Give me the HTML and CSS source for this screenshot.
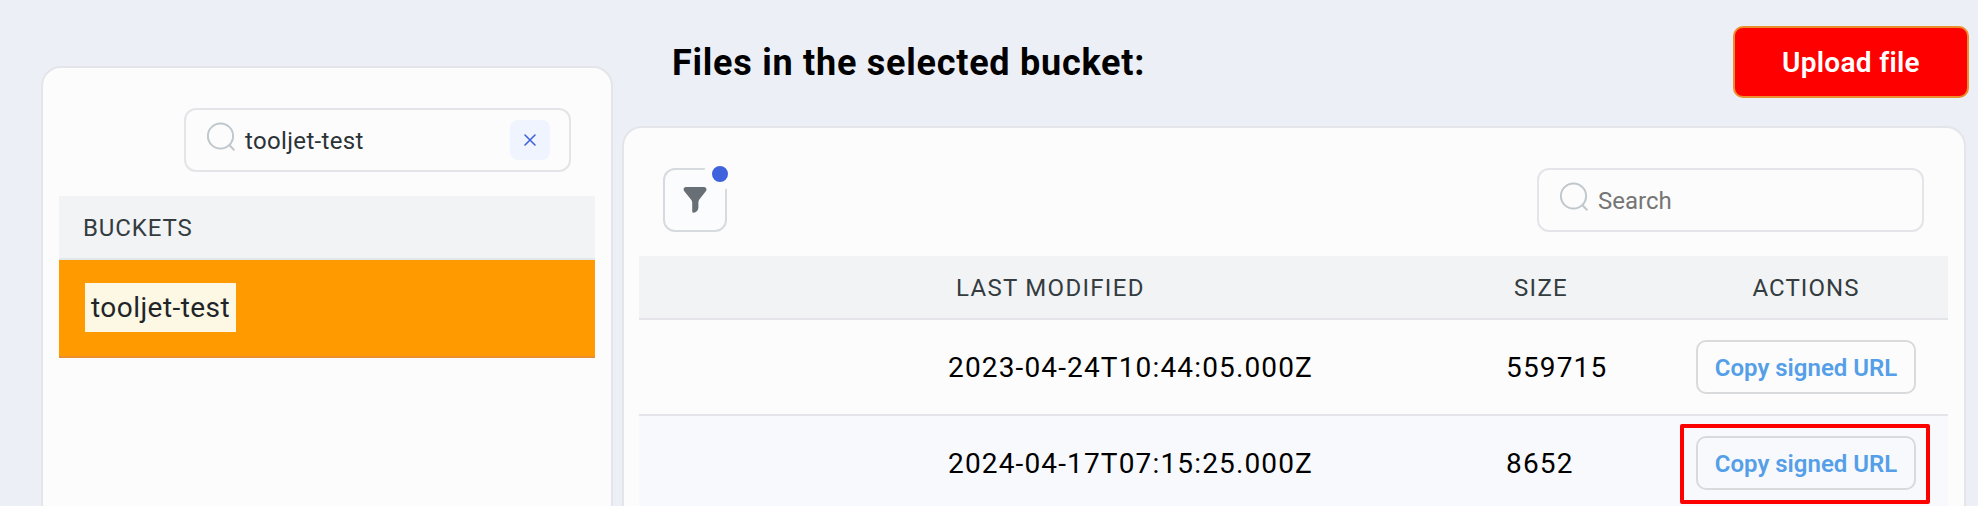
FILE: index.html
```html
<!DOCTYPE html>
<html lang="en">
<head>
<meta charset="utf-8">
<title>Buckets</title>
<link rel="stylesheet" href="styles.css">
</head>
<body>
<div class="app">
  <aside class="panel sidebar">
    <div class="toolbar sidebar-toolbar">
      <div class="search">
        <svg class="search-icon" width="32" height="32" viewBox="0 0 32 32" fill="none" stroke="#c1c8cd" stroke-width="2" stroke-linecap="round"><circle cx="15.5" cy="15" r="12.6"/><path d="M24.5 24.2l4.3 4.6"/></svg>
        <span class="search-value">tooljet-test</span>
        <button class="clear" aria-label="Clear"><svg width="14" height="14" viewBox="0 0 14 14" stroke="#3e63dd" stroke-width="1.6" stroke-linecap="round"><path d="M2 2l10 10M12 2L2 12"/></svg></button>
      </div>
    </div>
    <div class="bucket-table">
      <div class="head bucket-head">BUCKETS</div>
      <div class="bucket-row"><span class="highlight">tooljet-test</span></div>
    </div>
  </aside>
  <main class="content">
    <header class="topbar">
      <h1 class="title">Files in the selected bucket:</h1>
      <button class="upload">Upload file</button>
    </header>
    <section class="panel files">
      <div class="toolbar files-toolbar">
        <button class="filter" aria-label="Filter">
          <svg class="funnel" width="24" height="28" viewBox="0 0 24 28" fill="#687076"><path d="M3 1H21C23 1 24.2 3.2 23 5L16.5 13.2Q15.4 14.7 15.4 16.3V21.5Q15.4 24.6 13 25.9L11.5 26.6Q9.3 27.2 9.2 25.2V16.8Q9.2 15 8 13.5L1.3 5.2C-.2 3.2.8 1 3 1Z"/></svg>
          <span class="dot"></span>
        </button>
        <div class="search">
          <svg class="search-icon" width="32" height="32" viewBox="0 0 32 32" fill="none" stroke="#c1c8cd" stroke-width="2" stroke-linecap="round"><circle cx="15.5" cy="15" r="12.6"/><path d="M24.5 24.2l4.3 4.6"/></svg>
          <span class="search-value placeholder">Search</span>
        </div>
      </div>
      <div class="file-table">
        <div class="head file-row file-head">
          <span></span><span class="cell modified">LAST MODIFIED</span><span class="cell size">SIZE</span><span class="cell actions">ACTIONS</span>
        </div>
        <div class="file-row">
          <span></span><span class="cell modified">2023-04-24T10:44:05.000Z</span><span class="cell size">559715</span><span class="cell actions"><button class="copy">Copy signed URL</button></span>
        </div>
        <div class="file-row striped">
          <span></span><span class="cell modified">2024-04-17T07:15:25.000Z</span><span class="cell size">8652</span><span class="cell actions marked"><button class="copy">Copy signed URL</button></span>
        </div>
      </div>
    </section>
  </main>
</div>
</body>
</html>
```
FILE: styles.css
```css
*, *::before, *::after { box-sizing: border-box; }
body {
  margin: 0;
  background: #eceff5;
  font-family: "Roboto", "Noto Sans", sans-serif;
  color: #000;
}
button { font-family: inherit; padding: 0; }
.app {
  display: flex;
  align-items: flex-start;
  gap: 9px;
  height: 506px;
  padding-left: 41px;
  overflow: hidden;
}
.panel {
  background: #fcfcfc;
  border: 2px solid #e3e5ea;
  border-radius: 20px;
  padding: 0 16px;
}
.sidebar { width: 572px; height: 480px; margin-top: 66px; flex: none; }
.toolbar { display: flex; padding: 40px 24px 24px; }
.sidebar-toolbar { justify-content: flex-end; }
.files-toolbar { justify-content: space-between; }
.search {
  display: flex;
  align-items: center;
  width: 387px;
  height: 64px;
  padding: 0 19px;
  border: 2px solid #e4e4e9;
  border-radius: 12px;
}
.search-icon { flex: none; margin: -6px 8px 0 0; }
.search-value {
  flex: 1;
  padding-top: 1px;
  font-size: 24px;
  letter-spacing: .35px;
  color: #2b3236;
}
.placeholder { color: #757575; letter-spacing: 0; }
.clear {
  display: flex;
  align-items: center;
  justify-content: center;
  width: 40px;
  height: 40px;
  border: 0;
  border-radius: 8px;
  background: #f0f4ff;
}
.head {
  height: 64px;
  border-bottom: 2px solid #e4e7ea;
  background: #f1f3f5;
  color: #343c40;
  font-size: 24px;
  letter-spacing: .9px;
}
.bucket-head { display: flex; align-items: center; padding: 2px 24px 0; }
.bucket-row {
  display: flex;
  align-items: flex-start;
  height: 98px;
  padding: 23px 26px 0;
  border-bottom: 2px solid #e98f2c;
  background: #ff9b00;
}
.highlight {
  height: 49px;
  padding: 0 6px;
  background: #fcf8e3;
  color: #212529;
  font-size: 28px;
  line-height: 50px;
  letter-spacing: .45px;
}
.content { flex: none; width: 1347px; }
.topbar {
  display: flex;
  align-items: center;
  justify-content: space-between;
  height: 72px;
  margin-top: 26px;
  padding-left: 50px;
}
.title { margin: 0; padding-top: 2px; font-size: 36px; font-weight: 700; letter-spacing: .75px; }
.upload {
  width: 236px;
  height: 72px;
  border: 2px solid #e98f2c;
  border-radius: 10px;
  background: #f00;
  color: #fff;
  font-size: 28px;
  font-weight: 600;
  letter-spacing: .3px;
}
.files { width: 1344px; height: 420px; margin-top: 28px; padding: 0 16px 0 15px; }
.filter {
  position: relative;
  display: flex;
  align-items: center;
  justify-content: center;
  width: 64px;
  height: 64px;
  border: 2px solid #d7dbdf;
  border-radius: 12px;
  background: #fbfcfd;
}
.dot {
  position: absolute;
  top: -12px;
  right: -11px;
  width: 32px;
  height: 32px;
  border: 8px solid #fcfcfc;
  border-radius: 50%;
  background: #3e63dd;
}
.file-row {
  display: grid;
  grid-template-columns: 285px 558px 190px 276px;
  align-items: center;
  height: 96px;
  border-bottom: 2px solid #e4e4e9;
  font-size: 28px;
  letter-spacing: 1.15px;
}
.file-head { height: 64px; padding-top: 2px; font-size: 24px; letter-spacing: 1.3px; }
.striped { background: #f8f9fc; }
.cell { padding-left: 24px; }
.file-head .cell { padding-left: 32px; }
.file-row .actions { padding: 0 8px 0 0; text-align: center; }
.file-head .actions { letter-spacing: 1.1px; }
.copy {
  display: block;
  width: 220px;
  height: 54px;
  margin: 0 auto;
  padding-top: 1px;
  border: 2px solid #d9dadc;
  border-radius: 10px;
  background: transparent;
  color: #559fe8;
  font-size: 24px;
  font-weight: 600;
}
.marked { position: relative; }
.marked::after {
  content: "";
  position: absolute;
  top: -12px;
  left: 8px;
  width: 250px;
  height: 80px;
  border: 4px solid #f00;
  border-radius: 2px;
}
```
